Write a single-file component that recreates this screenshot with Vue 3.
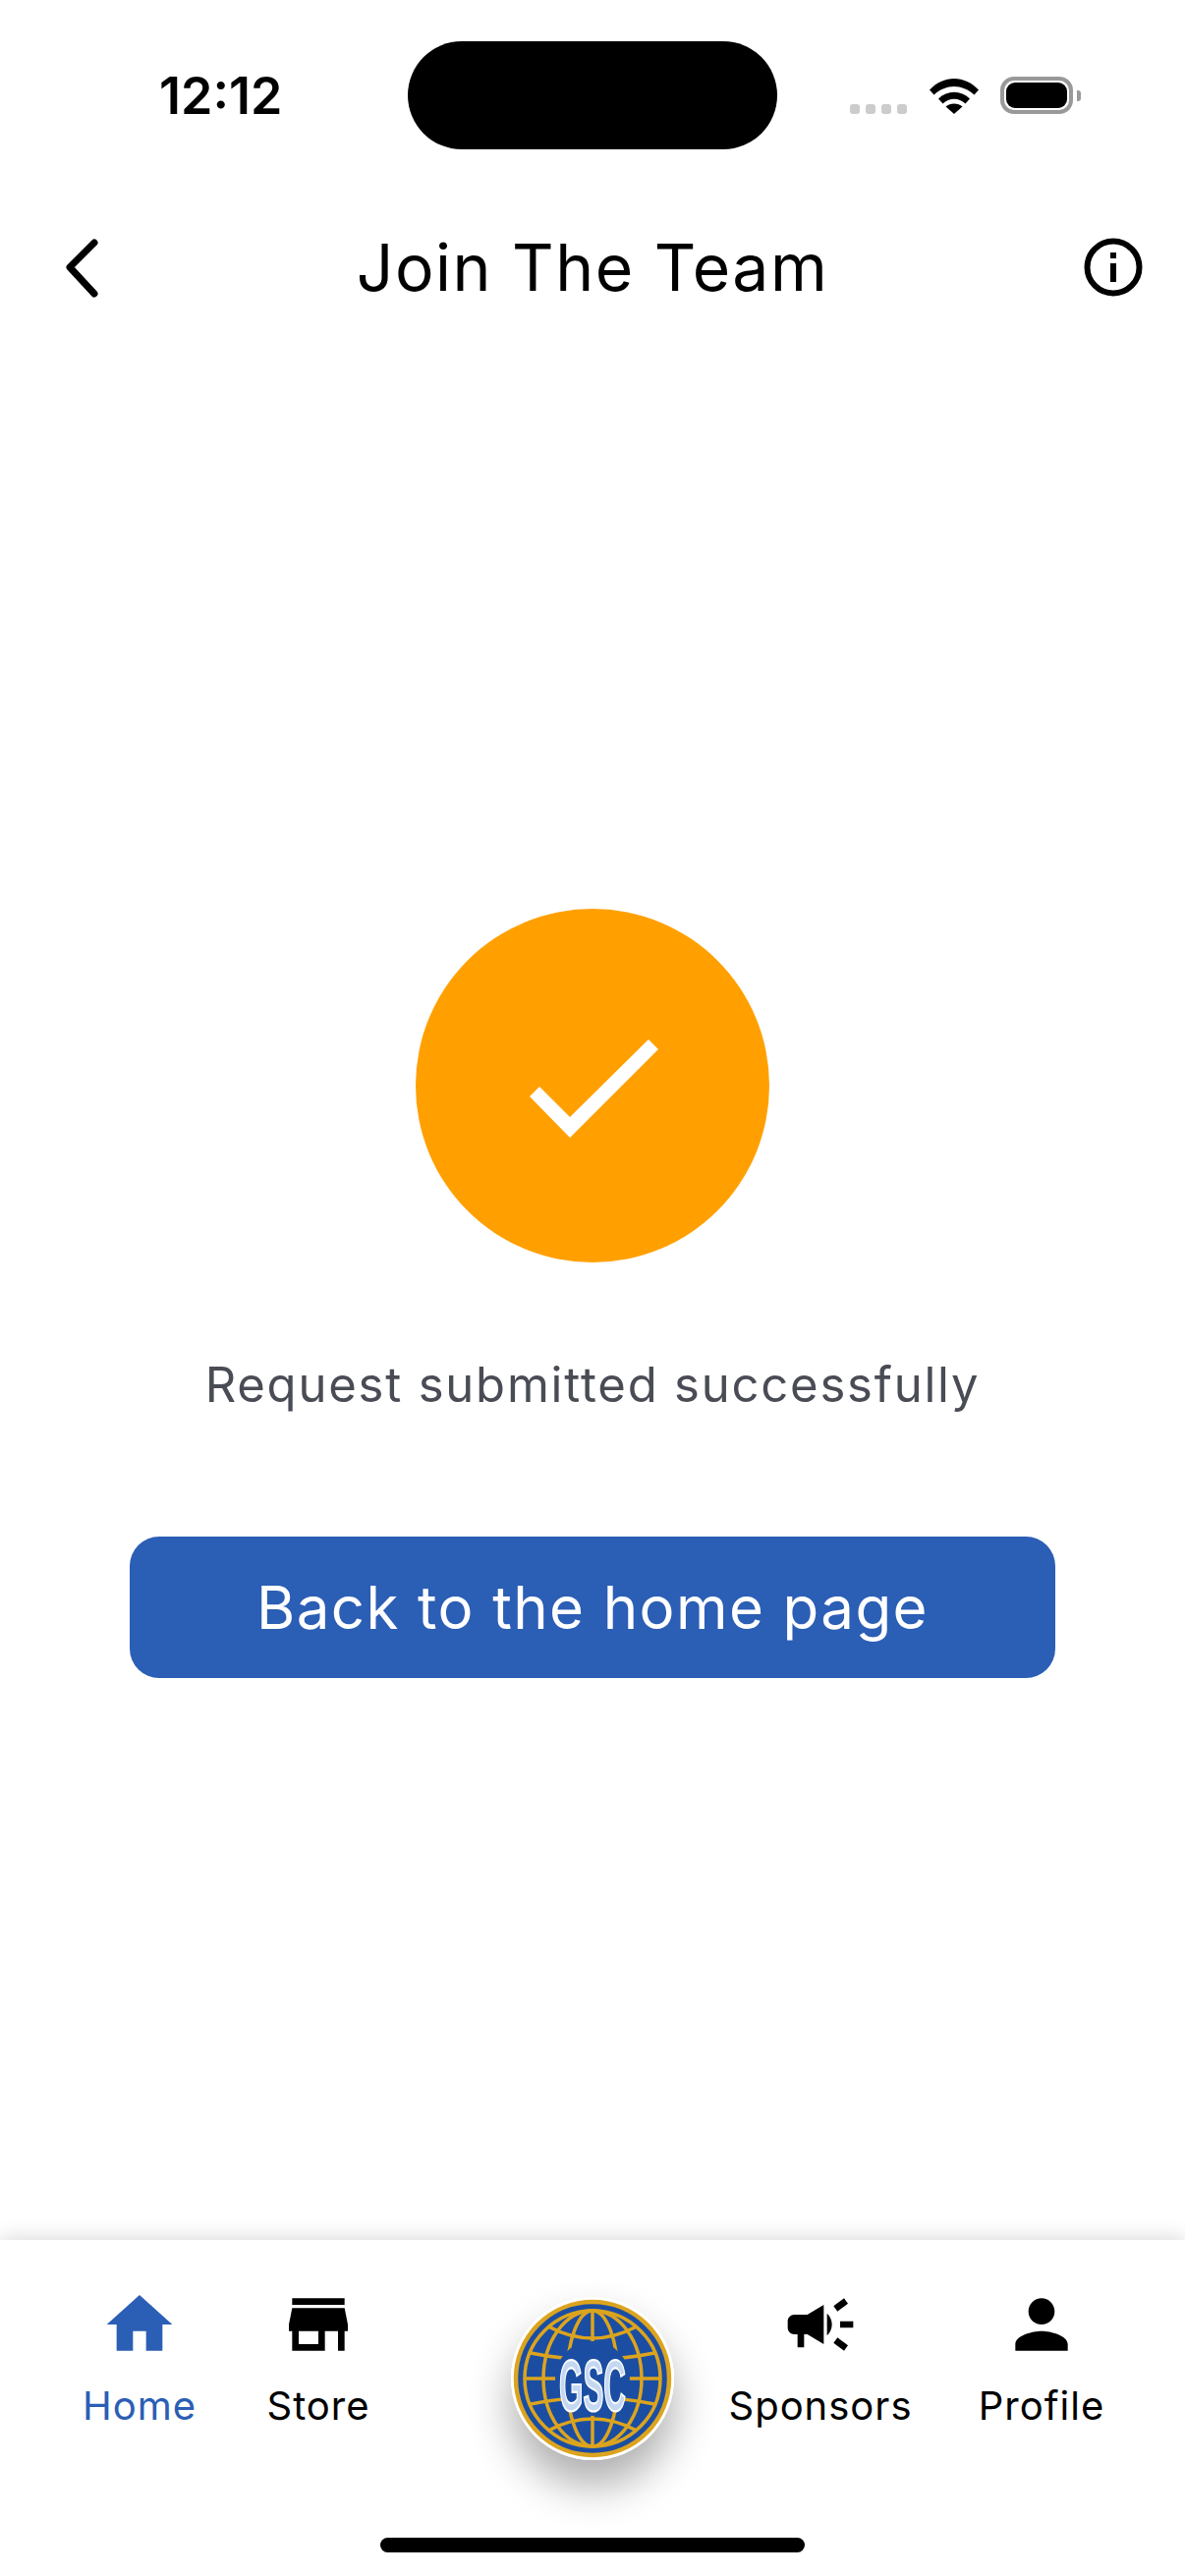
<script setup>
const meridians = [50, 26]
const tabs = [
  { label: 'Home', cls: 'home', active: true, d: 'M10 20v-6h4v6h5v-8h3L12 3 2 12h3v8z' },
  { label: 'Store', cls: 'store', d: 'M20 4H4v2h16V4zm1 10v-2l-1-5H4l-1 5v2h1v6h10v-6h4v6h2v-6h1zm-9 4H6v-4h6v4z' },
  { label: 'Sponsors', cls: 'sponsors', d: 'M18 11v2h4v-2h-4zm-2 6.61c.96.71 2.21 1.65 3.2 2.39.4-.53.8-1.07 1.2-1.6-.99-.74-2.24-1.68-3.2-2.4-.4.54-.8 1.08-1.2 1.61zM20.4 5.6c-.4-.53-.8-1.07-1.2-1.6-.99.74-2.24 1.68-3.2 2.4.4.53.8 1.07 1.2 1.6.96-.72 2.21-1.65 3.2-2.4zM4 9c-1.1 0-2 .9-2 2v2c0 1.1.9 2 2 2h1v4h2v-4h1l5 3V6L8 9H4zm11.5 3c0-1.33-.58-2.53-1.5-3.35v6.69c.92-.81 1.5-2.01 1.5-3.34z' },
  { label: 'Profile', cls: 'profile', d: 'M12 12c2.21 0 4-1.79 4-4s-1.79-4-4-4-4 1.79-4 4 1.79 4 4 4zm0 2c-2.67 0-8 1.34-8 4v2h16v-2c0-2.66-5.33-4-8-4z' }
]
</script>

<template>
  <div class="screen">
    <div class="status">
      <span class="time">12:12</span>
      <div class="island"></div>
      <div class="sys">
        <div class="dots"><i></i><i></i><i></i><i></i></div>
        <svg class="wifi" width="50" height="37" viewBox="0 0 50 37">
          <path d="M0 12.5C14-3 36-3 50 12.5l-4.5 5C33 6 17 6 4.500 17.500z" fill="#000"/>
          <path d="M9 21.500C18 12.500 32 12.500 41 21.500l-4.500 5C30 20 20 20 13.500 26.500z" fill="#000"/>
          <path d="M16.500 29.500C21 25.500 29 25.500 33.500 29.500L25 37z" fill="#000"/>
        </svg>
        <div class="battery"><div class="cell"></div><div class="cap"></div></div>
      </div>
    </div>

    <header class="header">
      <svg class="back" width="40" height="64" viewBox="0 0 40 64">
        <path d="M33 7 L8 32 L33 59" fill="none" stroke="#000" stroke-width="7" stroke-linecap="round" stroke-linejoin="round"/>
      </svg>
      <h1 class="title">Join The Team</h1>
      <svg class="info" width="60" height="60" viewBox="0 0 60 60">
        <circle cx="30" cy="30" r="26.500" fill="none" stroke="#000" stroke-width="6"/>
        <rect x="27" y="26" width="6" height="19" fill="#000"/>
        <rect x="27" y="15" width="6" height="6" fill="#000"/>
      </svg>
    </header>

    <main class="main">
      <div class="circle">
        <svg width="360" height="360" viewBox="0 0 360 360">
          <polygon points="116,191 126,181 157,212 237,133 247,143 157,233" fill="#fff"/>
        </svg>
      </div>
      <p class="msg">Request submitted successfully</p>
      <button class="cta">Back to the home page</button>
    </main>

    <nav class="nav">
      <div class="tabs">
        <div v-for="t in tabs.slice(0, 2)" :key="t.label" :class="['tab', t.cls, { active: t.active }]">
          <svg width="80" height="80" viewBox="0 0 24 24"><path :d="t.d" fill="currentColor"/></svg>
          <span class="lbl">{{ t.label }}</span>
        </div>
        <div class="logo">
          <svg width="166" height="166" viewBox="0 0 166 166">
            <circle cx="83" cy="83" r="83" fill="#fff"/>
            <circle cx="83" cy="83" r="78" fill="#1b4ea3" stroke="#dca41e" stroke-width="4.500"/>
            <g fill="none" stroke="#dca41e" stroke-width="3.500">
              <circle cx="83" cy="83" r="69"/>
              <ellipse v-for="r in meridians" :key="r" cx="83" cy="83" :rx="r" ry="69"/>
              <path d="M83 14V152"/>
              <path d="M14 83H152"/>
              <path d="M20 57Q83 70 146 57"/>
              <path d="M20 109Q83 96 146 109"/>
              <path d="M38 30Q83 54 128 30"/>
              <path d="M38 136Q83 112 128 136"/>
            </g>
            <circle cx="83" cy="83" r="38" fill="#1b4ea3"/>
            <text x="83" y="0" transform="translate(0 116) scale(1 1.85)" text-anchor="middle" class="gsc" textLength="68" lengthAdjust="spacingAndGlyphs">GSC</text>
          </svg>
        </div>
        <div v-for="t in tabs.slice(2)" :key="t.label" :class="['tab', t.cls]">
          <svg width="80" height="80" viewBox="0 0 24 24"><path :d="t.d" fill="currentColor"/></svg>
          <span class="lbl">{{ t.label }}</span>
        </div>
      </div>
      <div class="indicator"></div>
    </nav>
  </div>
</template>

<style scoped>
.screen {
  width: 1206px;
  height: 2622px;
  display: flex;
  flex-direction: column;
  background: #fff;
  font-family: Inter, "Open Sans", sans-serif;
  color: #000;
  overflow: hidden;
}
.status {
  display: flex;
  align-items: center;
  height: 110px;
  margin-top: 42px;
  padding-left: 162px;
  flex: none;
}
.time {
  width: 253px;
  font-size: 52px;
  font-weight: 600;
  line-height: 1;
  margin-top: 2px;
}
.island {
  width: 376px;
  height: 110px;
  border-radius: 55px;
  background: #000;
}
.sys {
  display: flex;
  align-items: flex-end;
  margin-left: 74px;
  height: 38px;
}
.dots {
  display: flex;
  gap: 6px;
  width: 81px;
}
.dots i {
  width: 10px;
  height: 10px;
  border-radius: 3px;
  background: #ccc;
}
.wifi {
  display: block;
}
.battery {
  position: relative;
  width: 74px;
  height: 38px;
  box-sizing: border-box;
  margin-left: 22px;
  border: 4px solid #999;
  border-radius: 14px;
  padding: 2px;
}
.cell {
  width: 100%;
  height: 100%;
  border-radius: 9px;
  background: #000;
}
.cap {
  position: absolute;
  left: 74px;
  top: 10px;
  width: 4px;
  height: 11px;
  border-radius: 0 3px 3px 0;
  background: #999;
}
.header {
  display: grid;
  grid-template-columns: 1fr auto 1fr;
  align-items: center;
  height: 100px;
  margin-top: 70px;
  padding: 0 43px;
  flex: none;
}
.back {
  justify-self: start;
  margin-left: 20px;
}
.info {
  justify-self: end;
}
.title {
  margin: 0;
  font-size: 66px;
  font-weight: 400;
  line-height: 100px;
  letter-spacing: 1.5px;
}
.main {
  flex: 1;
  display: flex;
  flex-direction: column;
  align-items: center;
  padding-top: 603px;
}
.circle {
  width: 360px;
  height: 360px;
  border-radius: 50%;
  background: #ffa000;
}
.circle svg {
  display: block;
}
.msg {
  margin: 92px 0 0;
  font-size: 49px;
  line-height: 66px;
  font-weight: 400;
  color: #4a4c55;
  letter-spacing: 1.8px;
}
.cta {
  width: 942px;
  height: 144px;
  margin-top: 121px;
  border: 0;
  border-radius: 30px;
  background: #2b5eb5;
  color: #fff;
  font-family: inherit;
  font-size: 60px;
  font-weight: 400;
  letter-spacing: 1.4px;
}
.nav {
  position: relative;
  height: 342px;
  flex: none;
  background: #fff;
  box-shadow: 0 -3px 18px rgba(0, 0, 0, 0.14);
}
.tabs {
  display: flex;
  padding: 46px 0 0 62px;
  height: 257px;
  box-sizing: border-box;
}
.tab {
  display: flex;
  flex-direction: column;
  align-items: center;
  color: #000;
  flex: none;
}
.tab svg {
  display: block;
}
.tab.active {
  color: #2b5eb5;
}
.home, .store {
  width: 160px;
}
.store {
  margin-left: 22px;
}
.sponsors, .profile {
  width: 200px;
}
.sponsors {
  margin-left: 49px;
}
.profile {
  margin-left: 25px;
}
.lbl {
  margin-top: 20px;
  font-size: 40px;
  line-height: 46px;
  letter-spacing: 1px;
  white-space: nowrap;
}
.logo {
  width: 166px;
  height: 166px;
  margin: 12px 0 0 116px;
  border-radius: 50%;
  box-shadow: 0 26px 44px rgba(0, 0, 0, 0.32);
  flex: none;
}
.logo svg {
  display: block;
}
.gsc {
  font-family: "Liberation Sans", sans-serif;
  font-size: 40px;
  font-weight: 700;
  fill: #c5d8f2;
  stroke: #fff;
  stroke-width: 1.2px;
}
.indicator {
  width: 432px;
  height: 15px;
  margin: 46px auto 0;
  border-radius: 8px;
  background: #000;
}
</style>
